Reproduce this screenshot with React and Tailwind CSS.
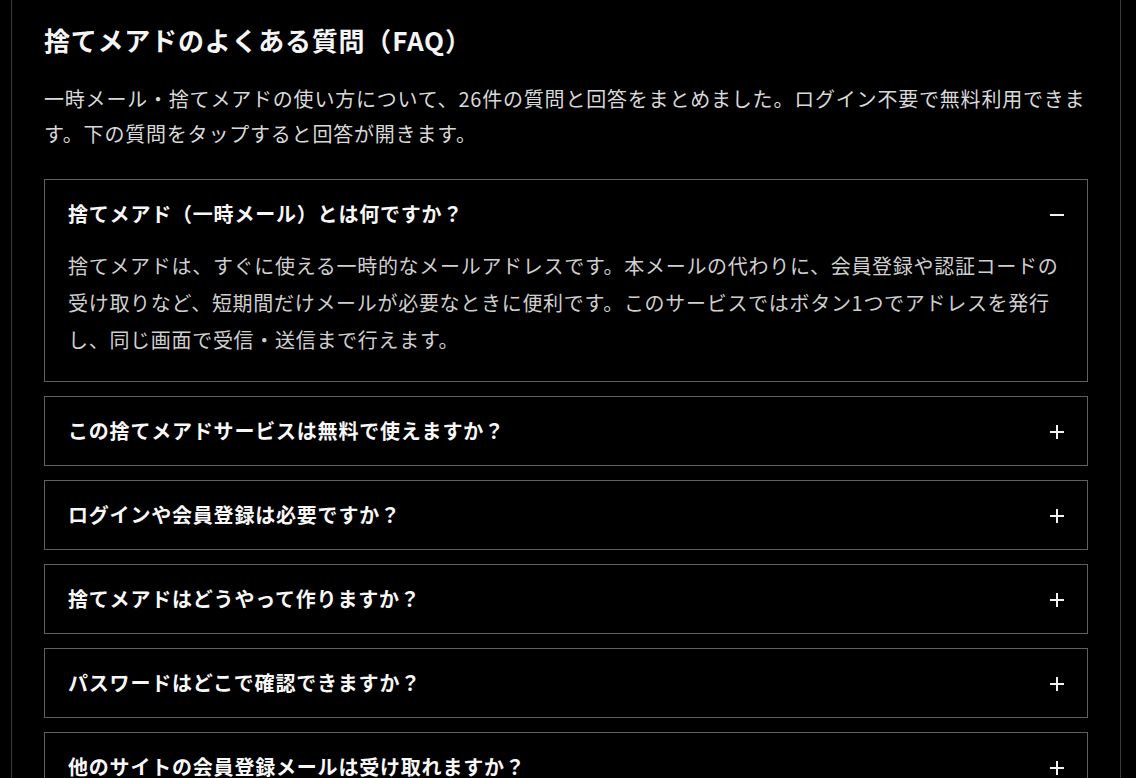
import React, { useState } from "react";

const faqs = [
  {
    q: "捨てメアド（一時メール）とは何ですか？",
    a: "捨てメアドは、すぐに使える一時的なメールアドレスです。本メールの代わりに、会員登録や認証コードの受け取りなど、短期間だけメールが必要なときに便利です。このサービスではボタン1つでアドレスを発行し、同じ画面で受信・送信まで行えます。",
  },
  { q: "この捨てメアドサービスは無料で使えますか？", a: "はい、無料でご利用いただけます。" },
  { q: "ログインや会員登録は必要ですか？", a: "不要です。ページを開くだけで使えます。" },
  { q: "捨てメアドはどうやって作りますか？", a: "ボタンを押すだけで発行されます。" },
  { q: "パスワードはどこで確認できますか？", a: "画面上のアドレス欄の下に表示されます。" },
  { q: "他のサイトの会員登録メールは受け取れますか？", a: "多くのサイトで受け取れます。" },
];

const Icon = ({ open }) => (
  <svg width="16" height="16" viewBox="0 0 16 16" className="shrink-0 mt-[2px]">
    <path d="M1 8h14" stroke="#f2f2f2" strokeWidth="2" />
    {!open && <path d="M8 1v14" stroke="#f2f2f2" strokeWidth="2" />}
  </svg>
);

const App = () => {
  const [openIndex, setOpenIndex] = useState(0);

  return (
    <div
      className="min-h-screen bg-black text-white"
      style={{ fontFamily: '"Noto Sans CJK JP", "Noto Sans", sans-serif' }}
    >
      <section className="ml-[11px] w-[1110px] min-h-screen border-x border-[#3a3a3a] px-8 pt-[21px]">
        <h2 className="text-[26px] leading-[38px] font-bold tracking-[0.03em] text-[#f5f5f5]">
          捨てメアドのよくある質問（FAQ）
        </h2>
        <p className="mt-[22px] mb-[28px] text-[20px] leading-[35px] tracking-[0.04em] text-[#d9d9d9]">
          一時メール・捨てメアドの使い方について、26件の質問と回答をまとめました。ログイン不要で無料利用できます。下の質問をタップすると回答が開きます。
        </p>

        <div className="flex flex-col gap-[14px]">
          {faqs.map((f, i) => {
            const open = openIndex === i;
            return (
              <div key={i} className="border border-[#606060]">
                <button
                  onClick={() => setOpenIndex(open ? -1 : i)}
                  className="w-full flex items-center justify-between pl-[23px] pr-[22px] py-[21px] text-left"
                >
                  <span className="text-[20px] leading-[26px] font-bold tracking-[0.8px] text-[#f7f7f7]">
                    {f.q}
                  </span>
                  <Icon open={open} />
                </button>
                {open && (
                  <div className="px-[23px] pb-[23px] -mt-[1px] text-[20px] leading-[37px] tracking-[0.7px] text-[#cfcfcf]">
                    {f.a}
                  </div>
                )}
              </div>
            );
          })}
        </div>
      </section>
    </div>
  );
};

export default App;
